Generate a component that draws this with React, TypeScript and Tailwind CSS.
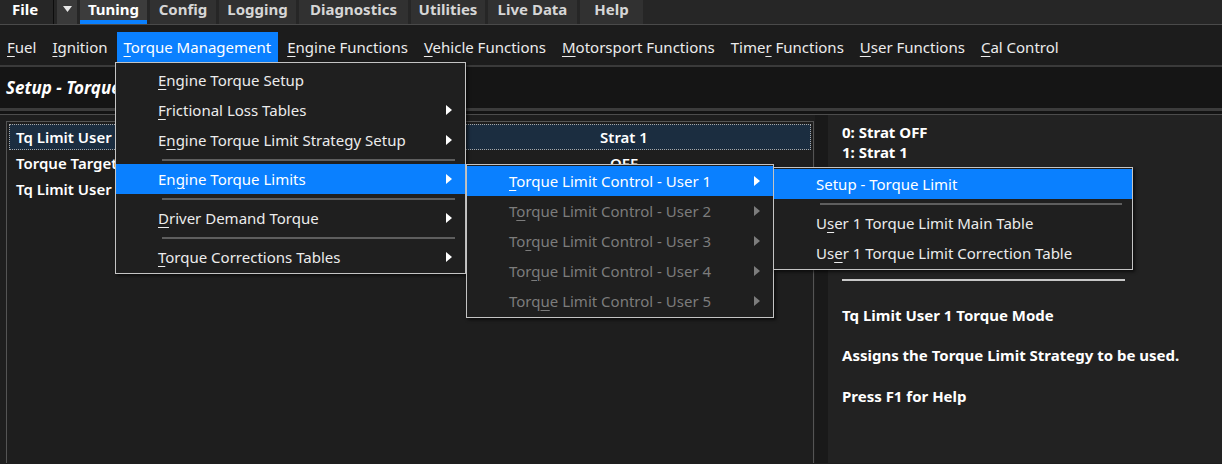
import React from "react";

type MenuEntry =
  | { kind: "sep" }
  | {
      kind: "item";
      text: string;
      mn?: number;
      sub?: boolean;
      active?: boolean;
      disabled?: boolean;
    };

const Mn = ({ text, idx }: { text: string; idx?: number }) => {
  if (idx === undefined || idx < 0) return <span>{text}</span>;
  return (
    <span className="whitespace-pre">
      {text.slice(0, idx)}
      <span className="underline decoration-1 underline-offset-[3px]">{text[idx]}</span>
      {text.slice(idx + 1)}
    </span>
  );
};

const Arrow = ({ color }: { color: string }) => (
  <svg width="6" height="10" viewBox="0 0 6 10" className="shrink-0">
    <path d="M0 0 L6 5 L0 10 Z" fill={color} />
  </svg>
);

const TABS = [
  { label: "Tuning", w: "w-[67px]", active: true },
  { label: "Config", w: "w-[66px]" },
  { label: "Logging", w: "w-[77px]" },
  { label: "Diagnostics", w: "w-[109px]" },
  { label: "Utilities", w: "w-[74px]" },
  { label: "Live Data", w: "w-[89px]" },
  { label: "Help", w: "w-[63px]" },
];

const MENUBAR = [
  { label: "Fuel", mn: 0 },
  { label: "Ignition", mn: 0 },
  { label: "Torque Management", mn: 0, open: true },
  { label: "Engine Functions", mn: 0 },
  { label: "Vehicle Functions", mn: 0 },
  { label: "Motorsport Functions", mn: 0 },
  { label: "Timer Functions", mn: 4 },
  { label: "User Functions", mn: 0 },
  { label: "Cal Control", mn: 0 },
];

const TORQUE_MENU: MenuEntry[] = [
  { kind: "item", text: "Engine Torque Setup", mn: 0 },
  { kind: "item", text: "Frictional Loss Tables", mn: 0, sub: true },
  { kind: "item", text: "Engine Torque Limit Strategy Setup", mn: 1, sub: true },
  { kind: "sep" },
  { kind: "item", text: "Engine Torque Limits", mn: 2, sub: true, active: true },
  { kind: "sep" },
  { kind: "item", text: "Driver Demand Torque", mn: 0, sub: true },
  { kind: "sep" },
  { kind: "item", text: "Torque Corrections Tables", mn: 0, sub: true },
];

const LIMITS_MENU: MenuEntry[] = [
  { kind: "item", text: "Torque Limit Control - User 1", mn: 0, sub: true, active: true },
  { kind: "item", text: "Torque Limit Control - User 2", mn: 1, sub: true, disabled: true },
  { kind: "item", text: "Torque Limit Control - User 3", mn: 2, sub: true, disabled: true },
  { kind: "item", text: "Torque Limit Control - User 4", mn: 3, sub: true, disabled: true },
  { kind: "item", text: "Torque Limit Control - User 5", mn: 4, sub: true, disabled: true },
];

const USER1_MENU: MenuEntry[] = [
  { kind: "item", text: "Setup - Torque Limit", active: true },
  { kind: "sep" },
  { kind: "item", text: "User 1 Torque Limit Main Table", mn: 1 },
  { kind: "item", text: "User 1 Torque Limit Correction Table", mn: 2 },
];

const ROWS = [
  { name: "Tq Limit User 1 Torque Mode", value: "Strat 1", selected: true },
  { name: "Torque Target Mode", value: "OFF" },
  { name: "Tq Limit User 1 Enable", value: "" },
];

function PopupMenu({ entries, className }: { entries: MenuEntry[]; className: string }) {
  return (
    <div
      className={
        "absolute flex flex-col border border-[#c4c4c4] bg-[#1f1f1f] shadow-[2px_2px_3px_rgba(0,0,0,0.6)] " +
        className
      }
    >
      {entries.map((e, i) =>
        e.kind === "sep" ? (
          <div key={i} className="flex h-[9px] items-center pl-[46px] pr-[10px]">
            <div className="h-[2px] w-full bg-[#5e5e5e]" />
          </div>
        ) : (
          <div
            key={i}
            className={
              "flex h-[30px] items-center pl-[42px] pr-[13px] " +
              (e.active ? "bg-[#0a80ff] text-white " : "") +
              (e.disabled ? "text-[#7c7c7c]" : "text-[#ececec]")
            }
          >
            <span className="flex-1 whitespace-nowrap">
              <Mn text={e.text} idx={e.mn} />
            </span>
            {e.sub && <Arrow color={e.disabled ? "#7c7c7c" : "#ffffff"} />}
          </div>
        ),
      )}
    </div>
  );
}

export default function App() {
  return (
    <div className="relative h-[464px] w-[1222px] overflow-hidden bg-[#1e1e1e] font-['Noto_Sans',sans-serif] text-[15px] text-white">
      {/* top ribbon tabs */}
      <div className="flex h-[24px] items-stretch bg-[#262626]">
        <div className="w-[53px] pl-[12px] pt-px text-[15px] font-bold leading-[16px]">File</div>
        <div className="w-px bg-[#0d0d0d]" />
        <div className="ml-[3px] flex w-[20px] justify-center bg-[#3a3a3a] pt-[6px]">
          <svg width="9" height="6" viewBox="0 0 9 6">
            <path d="M0 0 L9 0 L4.5 6 Z" fill="#e8e8e8" />
          </svg>
        </div>
        <div className="ml-[3px] flex gap-[3px]">
          {TABS.map((t) => (
            <div
              key={t.label}
              className={
                "relative pt-px text-center text-[15px] font-bold leading-[16px] " +
                t.w +
                (t.active ? " bg-[#3c3c3c] text-white" : " bg-[#313131] text-[#d6d6d6]")
              }
            >
              {t.label}
              {t.active && <div className="absolute bottom-0 left-0 h-[4px] w-full bg-[#0a80ff]" />}
            </div>
          ))}
        </div>
      </div>
      <div className="h-px bg-[#4a4a4a]" />

      {/* menu bar */}
      <div className="flex h-[40px] items-start gap-[2px] bg-[#1c1c1c] pt-[7px]">
        {MENUBAR.map((m) => (
          <div
            key={m.label}
            className={
              "flex h-[30px] items-center whitespace-nowrap px-[7px] " +
              (m.open ? "bg-[#0a80ff] text-white" : "text-[#ececec]")
            }
          >
            <Mn text={m.label} idx={m.mn} />
          </div>
        ))}
      </div>
      <div className="h-[2px] bg-[#3a3a3a]" />

      {/* page title */}
      <div className="flex h-[41px] items-center bg-[#151515] pl-[6px] text-[17px] font-bold italic">
        Setup - Torque Limit User 1
      </div>
      <div className="h-[3px] bg-[#3c3c3c]" />
      <div className="h-[3px] bg-[#141414]" />
      <div className="h-px bg-[#4c4c4c]" />

      {/* content */}
      <div className="flex h-[348px]">
        <div className="flex w-[815px] bg-[#1e1e1e] pl-[6px] pt-[6px]">
          <div className="flex w-[808px] flex-col border-l border-r border-t border-[#545454] px-[2px] pt-[2px]">
            {ROWS.map((r) => (
              <div
                key={r.name}
                className={
                  "flex h-[26px] items-center font-semibold " +
                  (r.selected ? "border border-dotted border-[#a8a8a8] bg-[#1b2d40]" : "border border-transparent")
                }
              >
                <span className="w-[428px] whitespace-nowrap pl-[6px]">{r.name}</span>
                <span className="flex-1 text-center">{r.value}</span>
              </div>
            ))}
          </div>
        </div>
        <div className="w-[13px] bg-[#191919]" />
        <div className="flex flex-1 flex-col bg-[#222222] pl-[14px] pt-[7px] font-bold">
          <div className="leading-[20px]">0: Strat OFF</div>
          <div className="leading-[20px]">1: Strat 1</div>
          <div className="mt-[117px] h-[2px] w-[283px] bg-[#c8c8c8]" />
          <div className="mt-[24px] leading-[20px]">Tq Limit User 1 Torque Mode</div>
          <div className="mt-[20px] leading-[20px]">Assigns the Torque Limit Strategy to be used.</div>
          <div className="mt-[21px] leading-[20px]">Press F1 for Help</div>
        </div>
      </div>

      {/* open menus */}
      <PopupMenu entries={TORQUE_MENU} className="left-[115px] top-[62px] w-[351px] pt-[2px] pb-[1px]" />
      <PopupMenu entries={LIMITS_MENU} className="left-[466px] top-[164px] w-[308px] pt-[1px] pb-px" />
      <PopupMenu entries={USER1_MENU} className="left-[773px] top-[167px] w-[360px] pt-px pb-[1px]" />
    </div>
  );
}
